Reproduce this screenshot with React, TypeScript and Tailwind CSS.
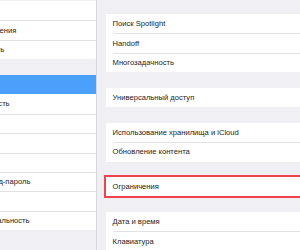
type Row = { label: string; selected?: boolean };

const sidebar: Row[][] = [
  [{ label: "Уведомления" }, { label: "Пункт управления" }, { label: "Не беспокоить" }],
  [
    { label: "Основные", selected: true },
    { label: "Экран и яркость" },
    { label: "Обои" },
    { label: "Звуки" },
    { label: "Siri" },
    { label: "Touch ID и код-пароль" },
    { label: "Аккумулятор" },
    { label: "Конфиденциальность" },
  ],
];

const groups: { rows: string[]; highlight?: boolean }[] = [
  { rows: ["Поиск Spotlight", "Handoff", "Многозадачность"] },
  { rows: ["Универсальный доступ"] },
  { rows: ["Использование хранилища и iCloud", "Обновление контента"] },
  { rows: ["Ограничения"], highlight: true },
  { rows: ["Дата и время", "Клавиатура", "Язык и регион"] },
];

function SidebarGroup({ rows }: { rows: Row[] }) {
  return (
    <div className="bg-white">
      {rows.map((row, i) => {
        const prevSelected = i > 0 && rows[i - 1].selected;
        const sep = i > 0 && !row.selected && !prevSelected;
        return (
          <div
            key={row.label}
            className={
              row.selected
                ? "flex h-[19.45px] items-center bg-[#4ba0fb] pl-[47.5px] text-white"
                : "pl-[47.5px]"
            }
          >
            {row.selected ? (
              <span className="whitespace-nowrap">{row.label}</span>
            ) : (
              <div
                className={`flex h-[19.45px] items-center whitespace-nowrap ${
                  sep ? "border-t border-[#e2e2e6]" : ""
                }`}
              >
                {row.label}
              </div>
            )}
          </div>
        );
      })}
    </div>
  );
}

export default function App() {
  return (
    <div className="flex h-[250px] w-[300px] overflow-hidden bg-[#efeff4] font-['Liberation_Sans',Arial,sans-serif] text-[7.6px] leading-none text-[#1d1d20]">
      <aside className="w-[97px] shrink-0 overflow-hidden border-r border-[#d7d7dc]">
        <div className="ml-[-95px] flex w-[192px] flex-col gap-[15.45px] pt-[1px]">
          {sidebar.map((g, i) => (
            <SidebarGroup key={i} rows={g} />
          ))}
        </div>
      </aside>

      <main className="min-w-0 flex-1 overflow-hidden pl-[8.6px] pt-[14px]">
        <div className="flex w-[220px] flex-col gap-[15.45px]">
          {groups.map((g, gi) => (
            <div
              key={gi}
              className={`bg-white pl-[7px] ${
                g.highlight ? "outline-2 outline-solid outline-[#ef4350] outline-offset-[-0.5px]" : ""
              }`}
            >
              {g.rows.map((label, i) => (
                <div
                  key={label}
                  className={`flex h-[19.45px] items-center whitespace-nowrap ${
                    i > 0 ? "border-t border-[#e2e2e6]" : ""
                  }`}
                >
                  {label}
                </div>
              ))}
            </div>
          ))}
        </div>
      </main>
    </div>
  );
}
